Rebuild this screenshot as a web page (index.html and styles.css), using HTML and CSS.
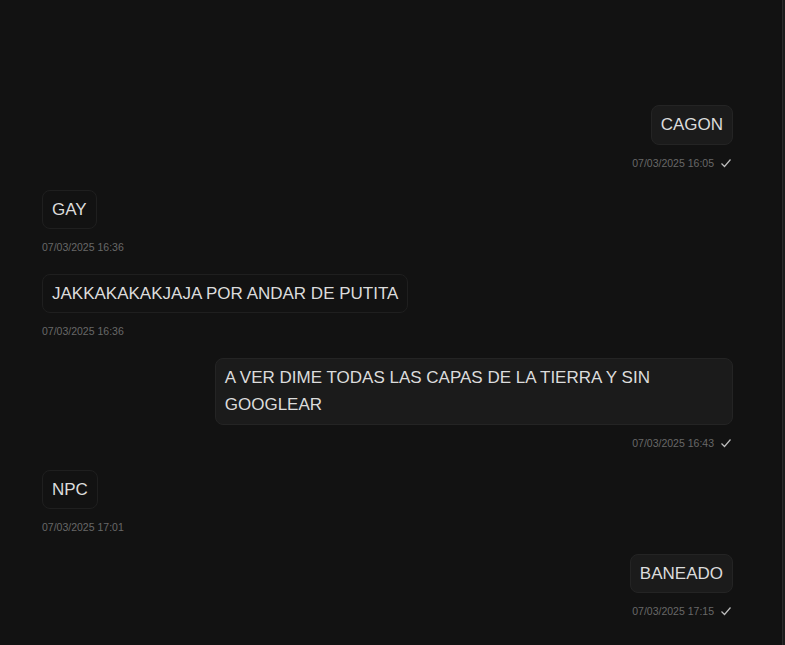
FILE: index.html
```html
<!DOCTYPE html>
<html lang="es">
<head>
<meta charset="utf-8">
<link rel="stylesheet" href="styles.css">
</head>
<body>
<div class="page">
  <div class="chat">
    <div class="msg sent">
      <div class="bubble">CAGON</div>
      <div class="meta"><span>07/03/2025 16:05</span><svg class="check" viewBox="0 0 12 12"><path d="M1.5 6.5 L4.5 9.5 L10.5 2.5"/></svg></div>
    </div>
    <div class="msg recv">
      <div class="bubble">GAY</div>
      <div class="meta"><span>07/03/2025 16:36</span></div>
    </div>
    <div class="msg recv">
      <div class="bubble">JAKKAKAKAKJAJA POR ANDAR DE PUTITA</div>
      <div class="meta"><span>07/03/2025 16:36</span></div>
    </div>
    <div class="msg sent">
      <div class="bubble">A VER DIME TODAS LAS CAPAS DE LA TIERRA Y SIN GOOGLEAR</div>
      <div class="meta"><span>07/03/2025 16:43</span><svg class="check" viewBox="0 0 12 12"><path d="M1.5 6.5 L4.5 9.5 L10.5 2.5"/></svg></div>
    </div>
    <div class="msg recv">
      <div class="bubble">NPC</div>
      <div class="meta"><span>07/03/2025 17:01</span></div>
    </div>
    <div class="msg sent">
      <div class="bubble">BANEADO</div>
      <div class="meta"><span>07/03/2025 17:15</span><svg class="check" viewBox="0 0 12 12"><path d="M1.5 6.5 L4.5 9.5 L10.5 2.5"/></svg></div>
    </div>
  </div>
  <div class="rail"></div>
</div>
</body>
</html>
```
FILE: styles.css
```css
html, body {
  margin: 0;
  padding: 0;
  background: #121212;
  height: 100%;
  overflow: hidden;
}
.page {
  display: flex;
  height: 645px;
  font-family: "Liberation Sans", Arial, sans-serif;
}
.chat {
  flex: 1;
  border-right: 1px solid #2b2b2b;
  padding: 105.3px 49px 0 42px;
  display: flex;
  flex-direction: column;
}
.rail {
  width: 2px;
  background: #1b1b1b;
}
.msg {
  display: flex;
  flex-direction: column;
  margin-bottom: 20px;
}
.msg.sent { align-items: flex-end; }
.msg.recv { align-items: flex-start; }
.bubble {
  max-width: 75%;
  box-sizing: border-box;
  padding: 5px 9px;
  border-radius: 8px;
  font-size: 17px;
  line-height: 27.3px;
  color: #dcdcdc;
}
.sent .bubble {
  background: #1b1b1b;
  border: 1px solid #242424;
}
.recv .bubble {
  background: #121212;
  border: 1px solid #1f1f1f;
}
.meta {
  margin-top: 11px;
  height: 14px;
  display: flex;
  align-items: center;
  gap: 6px;
  font-size: 10.5px;
  color: #686868;
}
.check {
  width: 12px;
  height: 12px;
  margin-right: 1px;
}
.check path {
  fill: none;
  stroke: #bdbdbd;
  stroke-width: 1.2;
}
```
